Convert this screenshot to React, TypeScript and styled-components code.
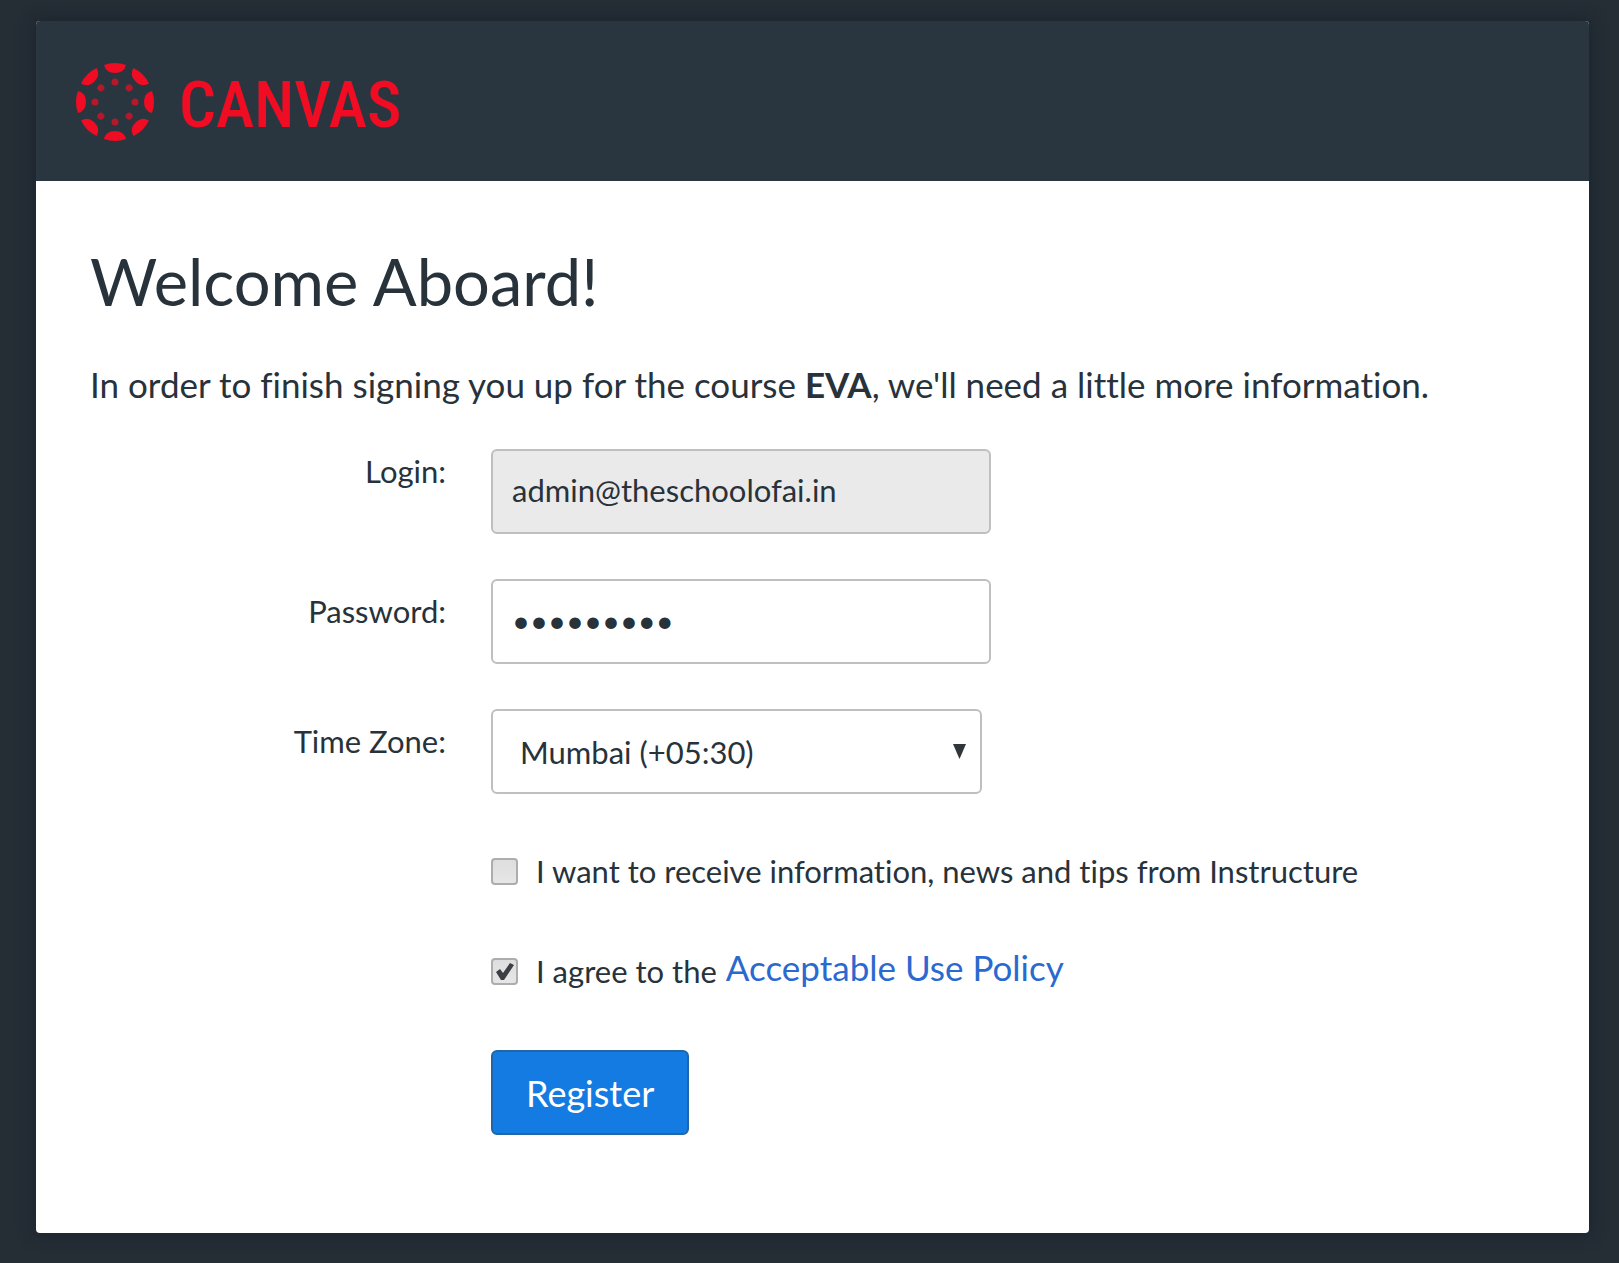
import React, { useState } from "react";
import styled, { createGlobalStyle } from "styled-components";

const GlobalStyle = createGlobalStyle`
  *, *::before, *::after { box-sizing: border-box; }
  body {
    margin: 0;
    background: #252d35;
    color: #27323a;
    font-family: Lato, "Open Sans", sans-serif;
    font-variant-ligatures: none;
  }
`;

const Page = styled.div`
  min-height: 100vh;
  padding: 21px 30px 30px 36px;
`;

const Card = styled.main`
  background: #ffffff;
  border-radius: 4px;
  box-shadow: 0 0 16px 2px #1b252d;
`;

const Header = styled.header`
  display: flex;
  align-items: center;
  gap: 24px;
  height: 160px;
  padding: 2px 39px 0;
  border-radius: 4px 4px 0 0;
  background: #2a363f;
  color: #f00c22;
`;

const Wordmark = styled.span`
  padding-top: 5px;
  font-family: "Roboto Condensed", "Liberation Sans Narrow", "DejaVu Sans Condensed", sans-serif;
  font-size: 65px;
  font-weight: 500;
  line-height: 72px;
`;

const Content = styled.div`
  padding: 60px 54px 98px;
`;

const Title = styled.h1`
  margin: 0 0 39px;
  font-size: 65px;
  font-weight: 400;
  line-height: 80px;
`;

const Intro = styled.p`
  margin: 0 0 41px;
  font-size: 35px;
  line-height: 48px;
`;

const Form = styled.form`
  display: flex;
  flex-direction: column;
  gap: 45px;
`;

const Row = styled.div`
  display: grid;
  grid-template-columns: 356px minmax(0, 500px);
  column-gap: 45px;
`;

const Label = styled.label<{ $raised?: boolean }>`
  padding-top: ${(p) => (p.$raised ? 4 : 14)}px;
  font-size: 31px;
  line-height: 36px;
  text-align: right;
`;

const TextField = styled.input`
  width: 100%;
  height: 85px;
  padding: 0 19px 3px;
  border: 2px solid #bfbfbf;
  border-radius: 6px;
  background: #ffffff;
  color: inherit;
  font: inherit;
  font-size: 31px;
  outline: none;

  &:read-only {
    background: #eaeaea;
  }
`;

const SelectBox = styled.div`
  display: grid;
  align-items: center;
  width: 491px;
  max-width: 100%;

  > * { grid-area: 1 / 1; }
  > svg { justify-self: end; margin-right: 16px; pointer-events: none; }
`;

const Select = styled.select`
  appearance: none;
  width: 100%;
  height: 85px;
  padding: 0 40px 0 27px;
  border: 2px solid #bfbfbf;
  border-radius: 6px;
  background: #ffffff;
  color: inherit;
  font: inherit;
  font-size: 31px;
`;

const Options = styled.div`
  display: flex;
  flex-direction: column;
  align-items: flex-start;
  gap: 52px;
  margin: 8px 0 10px 401px;
`;

const Option = styled.div`
  display: flex;
  align-items: center;
  gap: 18px;
  min-height: 48px;
`;

const CheckBox = styled.span`
  display: grid;

  > * { grid-area: 1 / 1; }
  > svg { pointer-events: none; }
`;

const Check = styled.input`
  appearance: none;
  width: 27px;
  height: 27px;
  margin: 0;
  border: 2px solid #adadad;
  border-radius: 4px;
  background: linear-gradient(#dedede, #e6e6e6);
`;

const OptionText = styled.div`
  display: flex;
  align-items: flex-start;
  gap: 9px;
`;

const OptionLabel = styled.label`
  font-size: 31px;
  line-height: 48px;
`;

const PolicyLink = styled.a`
  color: #2a69cf;
  font-size: 35px;
  line-height: 40px;
  text-decoration: none;
`;

const RegisterButton = styled.button`
  align-self: flex-start;
  height: 85px;
  margin-left: 401px;
  padding: 0 33px;
  border: 2px solid #1f67a8;
  border-radius: 6px;
  background: #137be2;
  color: #ffffff;
  font: inherit;
  font-size: 36px;
`;

const SPOKES = [0, 45, 90, 135, 180, 225, 270, 315];

function CanvasMark() {
  return (
    <svg width="80" height="80" viewBox="-40 -40 80 80" fill="currentColor" aria-hidden="true">
      {SPOKES.map((angle) => (
        <g key={angle} transform={`rotate(${angle})`}>
          <path d="M-11 -37 Q0 -41 11 -37 Q9 -29 0 -29 Q-9 -29 -11 -37Z" />
          <circle cx="0" cy="-20" r="3.5" opacity="0.7" />
        </g>
      ))}
    </svg>
  );
}

function CheckOption({
  id,
  checked,
  onChange,
  children,
}: {
  id: string;
  checked: boolean;
  onChange: (checked: boolean) => void;
  children: React.ReactNode;
}) {
  return (
    <Option>
      <CheckBox>
        <Check id={id} type="checkbox" checked={checked} onChange={(e) => onChange(e.target.checked)} />
        {checked && (
          <svg width="27" height="27" viewBox="0 0 27 27" aria-hidden="true">
            <path d="M5 14 L9 11 L12 15 L19 5 L23 7 L13 22 L10 22 Z" fill="#3b3f43" />
          </svg>
        )}
      </CheckBox>
      <OptionText>{children}</OptionText>
    </Option>
  );
}

export default function App() {
  const [password, setPassword] = useState("welcome12");
  const [news, setNews] = useState(false);
  const [agreed, setAgreed] = useState(true);

  return (
    <>
      <GlobalStyle />
      <Page>
        <Card>
          <Header>
            <CanvasMark />
            <Wordmark>CANVAS</Wordmark>
          </Header>
          <Content>
            <Title>Welcome Aboard!</Title>
            <Intro>
              In order to finish signing you up for the course <b>EVA</b>, we'll need a little more information.
            </Intro>
            <Form onSubmit={(e) => e.preventDefault()}>
              <Row>
                <Label htmlFor="login" $raised>Login:</Label>
                <TextField id="login" type="text" value="admin@theschoolofai.in" readOnly />
              </Row>
              <Row>
                <Label htmlFor="password">Password:</Label>
                <TextField
                  id="password"
                  type="password"
                  value={password}
                  onChange={(e) => setPassword(e.target.value)}
                />
              </Row>
              <Row>
                <Label htmlFor="zone">Time Zone:</Label>
                <SelectBox>
                  <Select id="zone" defaultValue="Mumbai">
                    <option value="Mumbai">Mumbai (+05:30)</option>
                  </Select>
                  <svg width="13" height="15" viewBox="0 0 13 15" aria-hidden="true">
                    <path d="M0 0H13L6.5 15Z" fill="#30363b" />
                  </svg>
                </SelectBox>
              </Row>
              <Options>
                <CheckOption id="news" checked={news} onChange={setNews}>
                  <OptionLabel htmlFor="news">
                    I want to receive information, news and tips from Instructure
                  </OptionLabel>
                </CheckOption>
                <CheckOption id="policy" checked={agreed} onChange={setAgreed}>
                  <OptionLabel htmlFor="policy">I agree to the</OptionLabel>
                  <PolicyLink href="#policy">Acceptable Use Policy</PolicyLink>
                </CheckOption>
              </Options>
              <RegisterButton type="submit">Register</RegisterButton>
            </Form>
          </Content>
        </Card>
      </Page>
    </>
  );
}
